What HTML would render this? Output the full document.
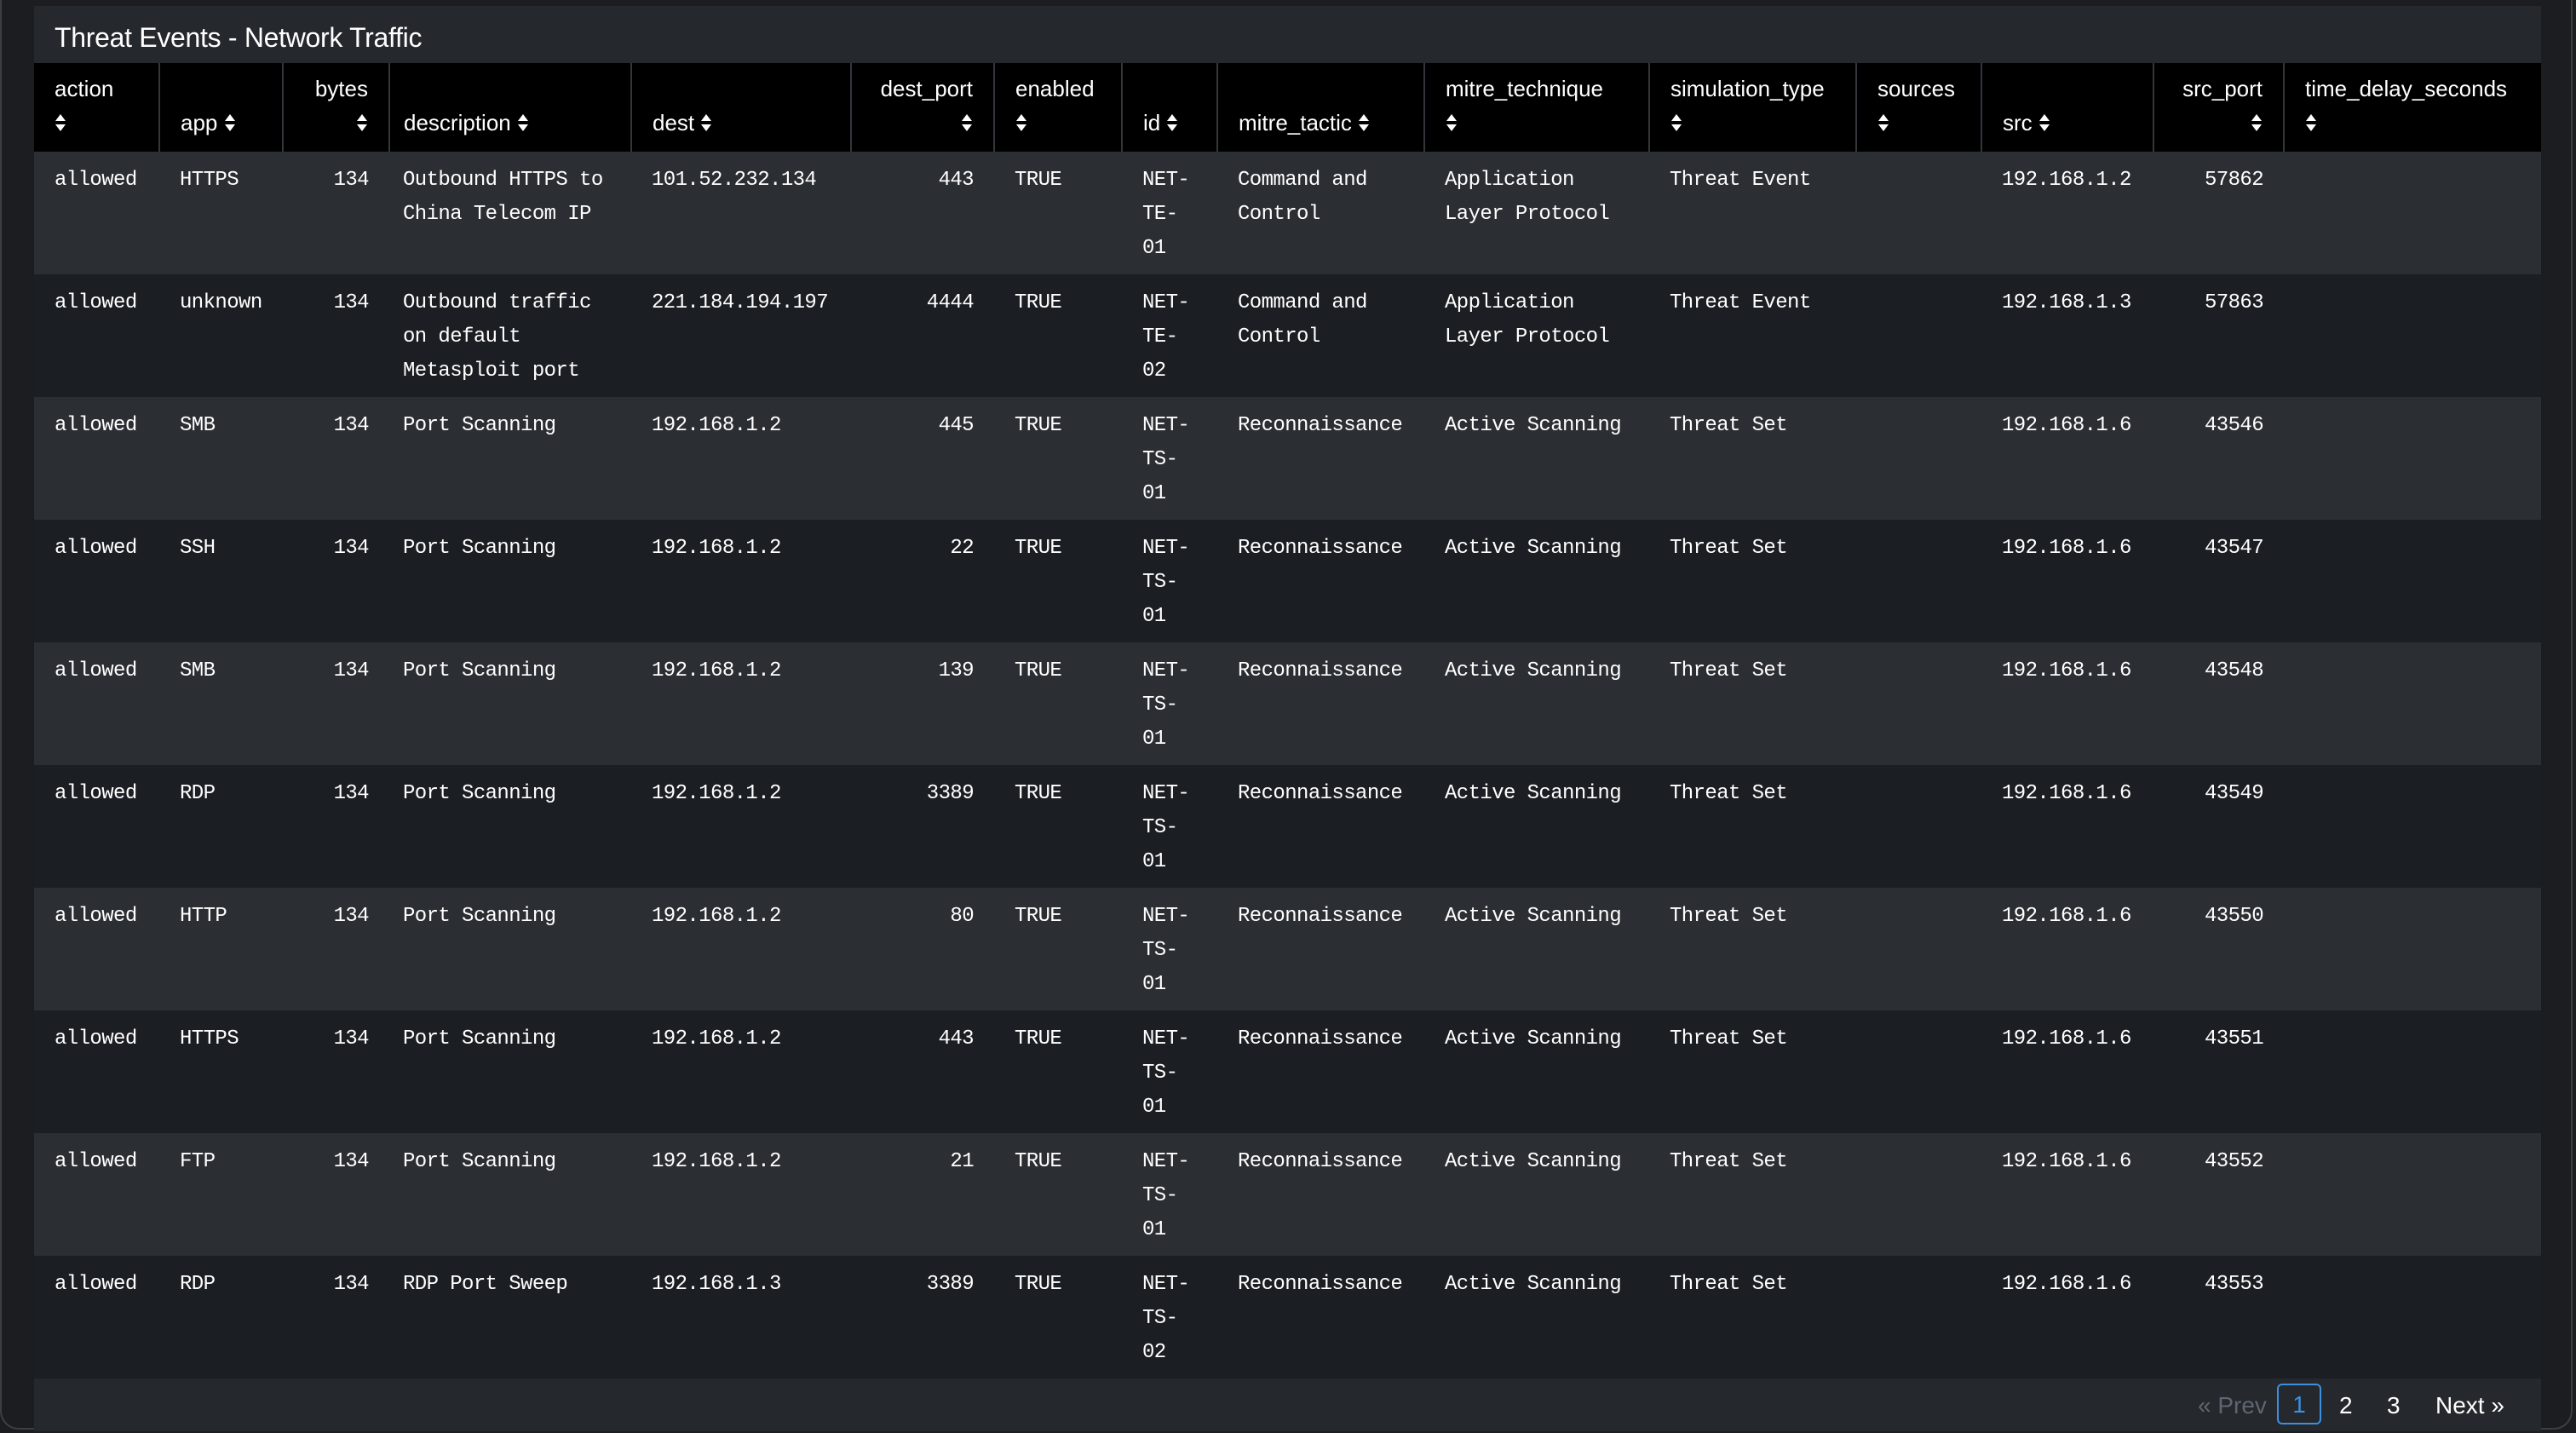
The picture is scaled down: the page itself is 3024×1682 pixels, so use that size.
<!DOCTYPE html>
<html><head><meta charset="utf-8"><style>
html,body{margin:0;padding:0;background:#1b1d21;width:3024px;height:1682px;overflow:hidden}
.frame{position:absolute;left:0;top:0;width:3020px;height:1678px;border:2px solid #3b3e44;border-top:none;border-radius:0 0 22px 22px;box-sizing:border-box;background:#1b1d21}
.panel{position:absolute;left:40px;top:7px;width:2943px;height:1673px;background:#25282c}
.title{position:absolute;left:24px;top:19px;font:32px "Liberation Sans",sans-serif;color:#fff;letter-spacing:-0.3px}
table{position:absolute;left:0;top:67px;border-collapse:collapse;table-layout:fixed;width:2943px}
th{background:#000;color:#fff;font:26px "Liberation Sans",sans-serif;font-weight:normal;text-align:left;vertical-align:bottom;padding:0 24px 14px;height:104px;line-height:40px;border-left:2px solid #33363b;box-sizing:border-box}
th:first-child{border-left:none}
th.r,td.r{text-align:right}
td{font:24px/40px "Liberation Mono",monospace;letter-spacing:-0.6px;color:#fff;vertical-align:top;padding:14px 24px 0;height:144px;box-sizing:border-box}
td.d{padding-left:16px;padding-right:16px}
tr.o td{background:#2b2e33}
tr.e td{background:#1b1e22}
svg{vertical-align:-2px}
.pag{position:absolute;left:0;top:1611px;width:2943px;height:62px;background:#25282c;font:28px "Liberation Sans",sans-serif;color:#fff}
.pag span{position:absolute;top:16px}
.box{position:absolute;left:2633px;top:6px;width:52px;height:48px;border:2px solid #3d8fe0;border-radius:6px;box-sizing:border-box;color:#3d8fe0;text-align:center;line-height:46px}
</style></head><body>
<div class="frame"></div>
<div class="panel">
<div class="title">Threat Events - Network Traffic</div>
<table>
<colgroup><col style="width:147px"><col style="width:145px"><col style="width:125px"><col style="width:284px"><col style="width:258px"><col style="width:168px"><col style="width:150px"><col style="width:112px"><col style="width:243px"><col style="width:264px"><col style="width:243px"><col style="width:147px"><col style="width:202px"><col style="width:153px"><col style="width:302px"></colgroup>
<thead><tr>
<th>action<br><S/></th><th>app <S/></th><th class="r">bytes<br><S/></th><th style="padding-left:16px">description <S/></th><th>dest <S/></th><th class="r">dest_port<br><S/></th><th>enabled<br><S/></th><th>id <S/></th><th>mitre_tactic <S/></th><th>mitre_technique<br><S/></th><th>simulation_type<br><S/></th><th>sources<br><S/></th><th>src <S/></th><th class="r">src_port<br><S/></th><th>time_delay_seconds<br><S/></th>
</tr></thead>
<tbody>
<tr class="o"><td>allowed</td><td>HTTPS</td><td class="r">134</td><td class="d">Outbound HTTPS to China Telecom IP</td><td>101.52.232.134</td><td class="r">443</td><td>TRUE</td><td>NET-<br>TE-<br>01</td><td>Command and Control</td><td>Application Layer Protocol</td><td>Threat Event</td><td></td><td>192.168.1.2</td><td class="r">57862</td><td></td></tr>
<tr class="e"><td>allowed</td><td>unknown</td><td class="r">134</td><td class="d">Outbound traffic on default Metasploit port</td><td>221.184.194.197</td><td class="r">4444</td><td>TRUE</td><td>NET-<br>TE-<br>02</td><td>Command and Control</td><td>Application Layer Protocol</td><td>Threat Event</td><td></td><td>192.168.1.3</td><td class="r">57863</td><td></td></tr>
<tr class="o"><td>allowed</td><td>SMB</td><td class="r">134</td><td class="d">Port Scanning</td><td>192.168.1.2</td><td class="r">445</td><td>TRUE</td><td>NET-<br>TS-<br>01</td><td>Reconnaissance</td><td>Active Scanning</td><td>Threat Set</td><td></td><td>192.168.1.6</td><td class="r">43546</td><td></td></tr>
<tr class="e"><td>allowed</td><td>SSH</td><td class="r">134</td><td class="d">Port Scanning</td><td>192.168.1.2</td><td class="r">22</td><td>TRUE</td><td>NET-<br>TS-<br>01</td><td>Reconnaissance</td><td>Active Scanning</td><td>Threat Set</td><td></td><td>192.168.1.6</td><td class="r">43547</td><td></td></tr>
<tr class="o"><td>allowed</td><td>SMB</td><td class="r">134</td><td class="d">Port Scanning</td><td>192.168.1.2</td><td class="r">139</td><td>TRUE</td><td>NET-<br>TS-<br>01</td><td>Reconnaissance</td><td>Active Scanning</td><td>Threat Set</td><td></td><td>192.168.1.6</td><td class="r">43548</td><td></td></tr>
<tr class="e"><td>allowed</td><td>RDP</td><td class="r">134</td><td class="d">Port Scanning</td><td>192.168.1.2</td><td class="r">3389</td><td>TRUE</td><td>NET-<br>TS-<br>01</td><td>Reconnaissance</td><td>Active Scanning</td><td>Threat Set</td><td></td><td>192.168.1.6</td><td class="r">43549</td><td></td></tr>
<tr class="o"><td>allowed</td><td>HTTP</td><td class="r">134</td><td class="d">Port Scanning</td><td>192.168.1.2</td><td class="r">80</td><td>TRUE</td><td>NET-<br>TS-<br>01</td><td>Reconnaissance</td><td>Active Scanning</td><td>Threat Set</td><td></td><td>192.168.1.6</td><td class="r">43550</td><td></td></tr>
<tr class="e"><td>allowed</td><td>HTTPS</td><td class="r">134</td><td class="d">Port Scanning</td><td>192.168.1.2</td><td class="r">443</td><td>TRUE</td><td>NET-<br>TS-<br>01</td><td>Reconnaissance</td><td>Active Scanning</td><td>Threat Set</td><td></td><td>192.168.1.6</td><td class="r">43551</td><td></td></tr>
<tr class="o"><td>allowed</td><td>FTP</td><td class="r">134</td><td class="d">Port Scanning</td><td>192.168.1.2</td><td class="r">21</td><td>TRUE</td><td>NET-<br>TS-<br>01</td><td>Reconnaissance</td><td>Active Scanning</td><td>Threat Set</td><td></td><td>192.168.1.6</td><td class="r">43552</td><td></td></tr>
<tr class="e"><td>allowed</td><td>RDP</td><td class="r">134</td><td class="d">RDP Port Sweep</td><td>192.168.1.3</td><td class="r">3389</td><td>TRUE</td><td>NET-<br>TS-<br>02</td><td>Reconnaissance</td><td>Active Scanning</td><td>Threat Set</td><td></td><td>192.168.1.6</td><td class="r">43553</td><td></td></tr>
</tbody></table>
<div class="pag">
<span style="left:2540px;color:#5f6671">« Prev</span>
<div class="box">1</div>
<span style="left:2706px">2</span>
<span style="left:2762px">3</span>
<span style="left:2819px">Next »</span>
</div>
</div>
<script>
document.querySelectorAll('S').forEach(function(e){
var s=document.createElementNS('http://www.w3.org/2000/svg','svg');
s.setAttribute('width','14');s.setAttribute('height','22');s.setAttribute('viewBox','0 0 14 22');
s.innerHTML='<path d="M7 1L13 9H1Z M7 21L13 13H1Z" fill="#fff"/>';
e.replaceWith(s);});
</script>
</body></html>
